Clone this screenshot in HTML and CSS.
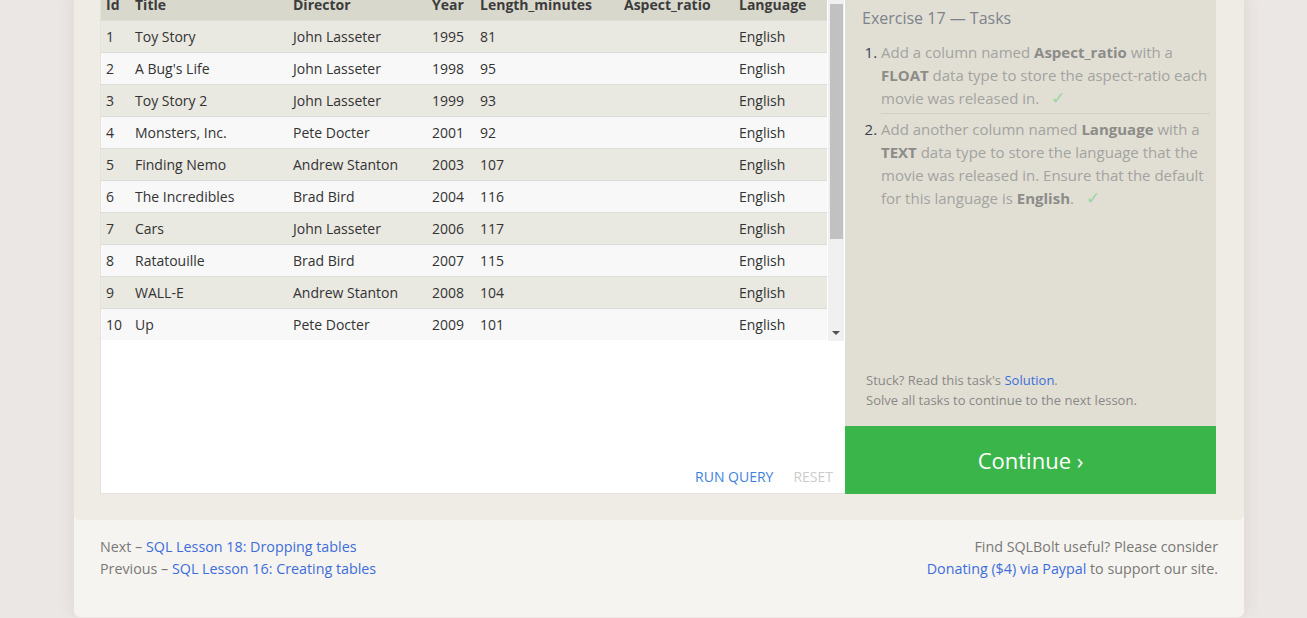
FILE: index.html
```html
<!DOCTYPE html>
<html>
<head>
<meta charset="utf-8">
<link rel="stylesheet" href="styles.css">
</head>
<body>
<div class="page">
  <div class="lesson">
    <div class="editor">
      <div class="results">
        <div class="table-wrap">
          <table class="data">
            <colgroup>
              <col class="c-id"><col class="c-title"><col class="c-dir"><col class="c-year"><col class="c-len"><col class="c-asp"><col class="c-lang">
            </colgroup>
            <thead>
              <tr><th>Id</th><th>Title</th><th>Director</th><th>Year</th><th>Length_minutes</th><th>Aspect_ratio</th><th>Language</th></tr>
            </thead>
            <tbody>
              <tr><td>1</td><td>Toy Story</td><td>John Lasseter</td><td>1995</td><td>81</td><td></td><td>English</td></tr>
              <tr><td>2</td><td>A Bug's Life</td><td>John Lasseter</td><td>1998</td><td>95</td><td></td><td>English</td></tr>
              <tr><td>3</td><td>Toy Story 2</td><td>John Lasseter</td><td>1999</td><td>93</td><td></td><td>English</td></tr>
              <tr><td>4</td><td>Monsters, Inc.</td><td>Pete Docter</td><td>2001</td><td>92</td><td></td><td>English</td></tr>
              <tr><td>5</td><td>Finding Nemo</td><td>Andrew Stanton</td><td>2003</td><td>107</td><td></td><td>English</td></tr>
              <tr><td>6</td><td>The Incredibles</td><td>Brad Bird</td><td>2004</td><td>116</td><td></td><td>English</td></tr>
              <tr><td>7</td><td>Cars</td><td>John Lasseter</td><td>2006</td><td>117</td><td></td><td>English</td></tr>
              <tr><td>8</td><td>Ratatouille</td><td>Brad Bird</td><td>2007</td><td>115</td><td></td><td>English</td></tr>
              <tr><td>9</td><td>WALL-E</td><td>Andrew Stanton</td><td>2008</td><td>104</td><td></td><td>English</td></tr>
              <tr><td>10</td><td>Up</td><td>Pete Docter</td><td>2009</td><td>101</td><td></td><td>English</td></tr>
            </tbody>
          </table>
        </div>
        <div class="scrollbar">
          <div class="sb-arrow"></div>
          <div class="sb-track"><div class="sb-thumb"></div></div>
          <div class="sb-arrow"><span class="sb-down"></span></div>
        </div>
      </div>
      <div class="actions">
        <span class="btn run">RUN QUERY</span>
        <span class="btn reset">RESET</span>
      </div>
    </div>
    <div class="tasks">
      <div class="tasks-body">
        <div class="tasks-title">Exercise 17 — Tasks</div>
        <ol class="task-list">
          <li>Add a column named <b>Aspect_ratio</b> with a <b>FLOAT</b> data type to store the aspect-ratio each movie was released in. <span class="check">✓</span></li>
          <li>Add another column named <b>Language</b> with a <b>TEXT</b> data type to store the language that the movie was released in. Ensure that the default for this language is <b>English</b>. <span class="check">✓</span></li>
        </ol>
        <div class="hint">
          <div>Stuck? Read this task's <a class="link">Solution</a>.</div>
          <div>Solve all tasks to continue to the next lesson.</div>
        </div>
      </div>
      <div class="continue">Continue ›</div>
    </div>
  </div>
  <div class="footer">
    <div class="foot-left">
      <div>Next – <a class="link">SQL Lesson 18: Dropping tables</a></div>
      <div>Previous – <a class="link">SQL Lesson 16: Creating tables</a></div>
    </div>
    <div class="foot-right">
      <div>Find SQLBolt useful? Please consider</div>
      <div><a class="link">Donating ($4) via Paypal</a> to support our site.</div>
    </div>
  </div>
</div>
</body>
</html>
```

FILE: styles.css
```css
html, body {
  margin: 0;
  padding: 0;
}
body {
  background: #ebe7e4;
  font-family: "Open Sans", "Noto Sans", sans-serif;
  color: #444;
  overflow: hidden;
}
.page {
  width: 1170px;
  margin-left: 74px;
  margin-top: -12px;
  background: #f5f4f1;
  box-shadow: 0 0 18px rgba(90, 70, 60, 0.10);
  border-radius: 0 0 6px 6px;
}
.lesson {
  display: flex;
  background: #efece5;
  padding: 0 28px 26px 26px;
  border-radius: 0 0 6px 6px;
}
.editor {
  width: 744px;
  background: #fff;
  border-left: 1px solid #e4e2da;
  border-bottom: 1px solid #e4e2da;
  display: flex;
  flex-direction: column;
  height: 505px;
}
.results {
  display: flex;
  height: 353px;
}
.table-wrap {
  flex: 1;
  overflow: hidden;
}
.data {
  border-collapse: collapse;
  table-layout: fixed;
  width: 726px;
  font-size: 14px;
}
.c-id { width: 29px; }
.c-title { width: 158px; }
.c-dir { width: 139px; }
.c-year { width: 48px; }
.c-len { width: 144px; }
.c-asp { width: 115px; }
.c-lang { width: 93px; }
.data th, .data td {
  text-align: left;
  padding: 0 0 0 5px;
  white-space: nowrap;
  overflow: hidden;
}
.data th {
  height: 32px;
  background: #d9d8cc;
  font-weight: 700;
  color: #3c3c3c;
}
.data td {
  height: 31px;
  padding-top: 1px;
  color: #333;
  box-shadow: inset 0 1px 0 #dcdcd8;
}
.data tbody tr:nth-child(odd) td { background: #e9e8e1; }
.data tbody tr:nth-child(even) td { background: #f8f8f8; }
.scrollbar {
  width: 16px;
  margin-right: 1px;
  background: #f0f0f0;
  display: flex;
  flex-direction: column;
}
.sb-arrow {
  height: 16px;
  display: flex;
  align-items: center;
  justify-content: center;
}
.sb-track {
  flex: 1;
  padding: 0 1px 0 2px;
}
.sb-thumb {
  height: 235px;
  background: #c1c1c1;
}
.sb-down {
  width: 0;
  height: 0;
  border-left: 4px solid transparent;
  border-right: 4px solid transparent;
  border-top: 4px solid #505050;
}
.actions {
  margin-top: auto;
  display: flex;
  justify-content: flex-end;
  gap: 20px;
  padding: 0 12px 7px 0;
  font-size: 14px;
}
.run { color: #3f7fe0; }
.reset { color: #cccccc; }
.tasks {
  width: 371px;
  background: #e1dfd4;
  display: flex;
  flex-direction: column;
  height: 506px;
}
.tasks-body {
  flex: 1;
  display: flex;
  flex-direction: column;
  padding: 18px 6px 16px 17px;
}
.tasks-title {
  font-size: 16px;
  color: #7d838c;
  line-height: 24px;
}
.task-list {
  margin: 11px 0 0 0;
  padding: 0 0 0 19px;
  font-size: 15px;
  line-height: 23px;
  color: #a3a3a0;
}
.task-list li::marker {
  color: #3a3f55;
}
.task-list li {
  padding-bottom: 3px;
}
.task-list li + li {
  border-top: 1px solid #d2d0c6;
  padding-top: 4px;
}
.task-list b {
  color: #8c8c88;
}
.check {
  color: #98d6a3;
  font-size: 17px;
  line-height: 1;
  margin-left: 8px;
}
.hint {
  margin-top: auto;
  padding-left: 4px;
  font-size: 13px;
  line-height: 20px;
  color: #8a8886;
}
.link {
  color: #3d6ddb;
  text-decoration: none;
}
.continue {
  height: 68px;
  background: #39b54a;
  color: #fff;
  font-size: 22px;
  display: flex;
  align-items: center;
  justify-content: center;
}
.footer {
  display: flex;
  justify-content: space-between;
  padding: 16px 26px 37px 26px;
  font-size: 14.3px;
  line-height: 22px;
  color: #7a7875;
}
.foot-right {
  text-align: right;
}
```
